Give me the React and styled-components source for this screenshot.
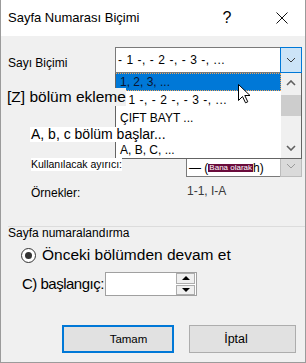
import React from "react";
import styled, { createGlobalStyle } from "styled-components";

const GlobalStyle = createGlobalStyle`
  * { box-sizing: border-box; }
  body {
    margin: 0;
    background: #ffffff;
    font-family: "Liberation Sans", Arial, sans-serif;
    color: #000;
  }
`;

const Window = styled.div`
  width: 306px;
  height: 363px;
  display: flex;
  flex-direction: column;
  border: 1px solid #9b9b9b;
  border-top: none;
  background: #f0f0f0;
  overflow: hidden;
`;

const TitleBar = styled.div`
  height: 36px;
  flex: none;
  display: flex;
  align-items: center;
  background: #ffffff;
  padding-left: 7px;
`;

const Title = styled.div`
  flex: 1;
  font-size: 13px;
  line-height: 16px;
`;

const TitleButton = styled.div`
  width: 46px;
  height: 36px;
  display: flex;
  align-items: center;
  justify-content: center;
  font-size: 16px;
  margin-right: ${(p) => p.$mr || 0}px;
`;

const Body = styled.div`
  flex: 1;
  display: flex;
  flex-direction: column;
  padding: 0 3px 0 7px;
`;

const Row = styled.div`
  display: flex;
  align-items: flex-start;
  margin-top: ${(p) => p.$mt || 0}px;
  justify-content: ${(p) => p.$justify || "flex-start"};
`;

const Label = styled.div`
  flex: none;
  width: ${(p) => (p.$w ? `${p.$w}px` : "auto")};
  margin-left: ${(p) => p.$ml || 0}px;
  margin-top: ${(p) => p.$mt || 0}px;
  font-size: ${(p) => p.$size || 12}px;
  line-height: ${(p) => p.$lh || 14}px;
  letter-spacing: ${(p) => p.$ls || 0}px;
  color: ${(p) => p.$color || "#000"};
  white-space: nowrap;
`;

/* labels that were painted over the open list */
const OverLabel = styled.div`
  position: relative;
  z-index: 3;
  align-self: flex-start;
  margin-left: ${(p) => p.$ml || 0}px;
  margin-top: ${(p) => p.$mt || 0}px;
  padding: 0 ${(p) => p.$px || 0}px;
  font-size: ${(p) => p.$size}px;
  line-height: ${(p) => p.$lh}px;
  background: ${(p) => p.$bg};
  white-space: nowrap;
`;

const Combo = styled.div`
  position: relative;
  width: 187px;
  height: 26px;
  display: flex;
  border: 1px solid #7a7a7a;
  background: #ffffff;
`;

const ComboText = styled.div`
  flex: 1;
  padding-left: 2px;
  font-size: 12px;
  line-height: 24px;
  letter-spacing: 0.55px;
  white-space: nowrap;
`;

const ComboButton = styled.div`
  width: 22px;
  margin: -1px -1px -1px 0;
  display: flex;
  align-items: center;
  justify-content: center;
  background: #cce4f7;
  border: 1px solid #0078d7;
`;

const DropList = styled.div`
  position: absolute;
  z-index: 2;
  left: -1px;
  top: 25px;
  width: 187px;
  height: 86px;
  display: flex;
  background: #ffffff;
  border: 1px solid #646464;
  border-top: none;
`;

const Items = styled.div`
  flex: 1;
  display: flex;
  flex-direction: column;
  overflow: hidden;
`;

const Item = styled.div`
  flex: none;
  height: ${(p) => p.$h || 18}px;
  padding: 1px 0 0 4px;
  font-size: 12px;
  line-height: 15px;
  letter-spacing: ${(p) => p.$ls || 0}px;
  white-space: nowrap;
  color: ${(p) => (p.$selected ? "#0a1530" : "#000")};
  background: ${(p) => (p.$selected ? "#0078d7" : "transparent")};
  border: 1px dotted ${(p) => (p.$selected ? "#f2a65a" : "transparent")};
  border-left: none;
`;

const ScrollBar = styled.div`
  width: 20px;
  display: flex;
  flex-direction: column;
  align-items: center;
  background: #f0f0f0;
`;

const ScrollArrow = styled.div`
  height: 20px;
  width: 100%;
  display: flex;
  align-items: center;
  justify-content: center;
`;

const ScrollThumb = styled.div`
  width: 100%;
  height: 21px;
  margin-top: 2px;
  background: #cdcdcd;
`;

const ScrollSpace = styled.div`
  flex: 1;
`;

const Cursor = styled.svg`
  position: absolute;
  z-index: 4;
  left: 122px;
  top: 36px;
`;

const SepCombo = styled.div`
  width: 116px;
  height: 22px;
  margin-left: auto;
  display: flex;
  border: 1px solid #7a7a7a;
  background: #ffffff;
`;

const SepText = styled.div`
  flex: 1;
  padding-left: 2px;
  padding-top: 3px;
  font-size: 12px;
  line-height: 14px;
  white-space: nowrap;
  display: flex;
  align-items: center;
`;

const Mark = styled.span`
  display: inline-block;
  margin-top: 1px;
  padding: 0 1px;
  font-size: 8px;
  line-height: 8px;
  color: #ffffff;
  background: #6a0b3b;
`;

const SepButton = styled.div`
  width: 22px;
  margin: -1px -1px -1px 0;
  display: flex;
  align-items: center;
  justify-content: center;
  background: #dadada;
  border: 1px solid #bcbcbc;
`;

const Divider = styled.div`
  height: 1px;
  margin: 26px -3px 0 0;
  background: #dcdcdc;
`;

const RadioRow = styled.div`
  display: flex;
  align-items: center;
  height: 20px;
  margin: 5px 0 0 13px;
  gap: 6px;
`;

const RadioCircle = styled.div`
  width: 15px;
  height: 15px;
  border-radius: 50%;
  border: 1px solid #333333;
  background: #ffffff;
  display: flex;
  align-items: center;
  justify-content: center;
`;

const RadioDot = styled.div`
  width: 7px;
  height: 7px;
  border-radius: 50%;
  background: #333333;
`;

const BigText = styled.span`
  font-size: 15.5px;
  line-height: 20px;
  white-space: nowrap;
`;

const SpinBox = styled.div`
  position: relative;
  width: 92px;
  height: 24px;
  display: flex;
  border: 1px solid #a0a0a0;
  background: #ffffff;
`;

const SpinInput = styled.div`
  flex: 1;
`;

const SpinButtons = styled.div`
  width: 20px;
  display: flex;
  flex-direction: column;
  gap: 1px;
  padding: 0 1px 0 0;
`;

const SpinButton = styled.div`
  flex: 1;
  display: flex;
  align-items: center;
  justify-content: center;
  background: #f0f0f0;
  border: 1px solid #adadad;
`;

const Triangle = styled.div`
  width: 0;
  height: 0;
  border-left: 4px solid transparent;
  border-right: 4px solid transparent;
  ${(p) =>
    p.$up
      ? "border-bottom: 4px solid #000;"
      : "border-top: 4px solid #000;"}
`;

const ButtonBar = styled.div`
  display: flex;
  justify-content: flex-end;
  gap: 15px;
  margin: 29px 6px 0 0;
`;

const DialogButton = styled.div`
  width: ${(p) => p.$w}px;
  height: 28px;
  display: flex;
  align-items: center;
  justify-content: center;
  padding-left: ${(p) => p.$pl || 0}px;
  padding-right: ${(p) => p.$pr || 0}px;
  background: #e1e1e1;
  border: ${(p) => (p.$primary ? "2px solid #0078d7" : "1px solid #adadad")};
  font-size: ${(p) => p.$size}px;
`;

const Chevron = ({ up, color = "#333", w = 10, sw = 1 }) => (
  <svg width={w} height="6" viewBox={`0 0 ${w} 6`}>
    <path
      d={up ? `M1 5 L${w / 2} 1 L${w - 1} 5` : `M1 1 L${w / 2} 5 L${w - 1} 1`}
      fill="none"
      stroke={color}
      strokeWidth={sw}
    />
  </svg>
);

export default function App() {
  return (
    <>
      <GlobalStyle />
      <Window>
        <TitleBar>
          <Title>Sayfa Numarası Biçimi</Title>
          <TitleButton $mr={9}>?</TitleButton>
          <TitleButton>
            <svg width="12" height="12" viewBox="0 0 12 12">
              <path d="M0.5 0.5 L11.5 11.5 M11.5 0.5 L0.5 11.5" stroke="#111" strokeWidth="1" />
            </svg>
          </TitleButton>
        </TitleBar>
        <Body>
          <Row $mt={11}>
            <Label $w={107} $mt={9}>Sayı Biçimi</Label>
            <Combo>
              <ComboText>- 1 -, - 2 -, - 3 -, ...</ComboText>
              <ComboButton>
                <Chevron color="#3c3c3c" />
              </ComboButton>
              <DropList>
                <Items>
                  <Item $selected>1, 2, 3, ...</Item>
                  <Item $ls={0.55}>- 1 -, - 2 -, - 3 -, ...</Item>
                  <Item>ÇIFT BAYT ...</Item>
                  <Item $h={14} />
                  <Item $h={16}>A, B, C, ...</Item>
                </Items>
                <ScrollBar>
                  <ScrollArrow>
                    <Chevron up color="#606060" w={10} sw={1.6} />
                  </ScrollArrow>
                  <ScrollThumb />
                  <ScrollSpace />
                  <ScrollArrow>
                    <Chevron color="#606060" w={10} sw={1.6} />
                  </ScrollArrow>
                </ScrollBar>
              </DropList>
              <Cursor width="13" height="20" viewBox="0 0 13 20">
                <path
                  d="M0.5 0.5 L0.5 16.5 L4.5 12.5 L7.5 18.8 L9.8 17.8 L6.8 11.5 L12 11.5 Z"
                  fill="#ffffff"
                  stroke="#000"
                  strokeWidth="1"
                  strokeLinejoin="miter"
                />
              </Cursor>
            </Combo>
          </Row>

          <OverLabel $mt={15} $ml={-1} $size={15.5} $lh={18} $bg="#f0f0f0">
            [Z] bölüm ekleme
          </OverLabel>
          <OverLabel $mt={21} $ml={22} $size={14} $lh={15} $px={1} $bg="#ffffff">
            A, b, c bölüm başlar...
          </OverLabel>

          <Row $mt={13}>
            <OverLabel $mt={3} $ml={23} $size={10.5} $lh={13} $bg="#ffffff">
              Kullanılacak ayırıcı:
            </OverLabel>
            <SepCombo>
              <SepText>
                — (<Mark>Bana olarak</Mark>h)
              </SepText>
              <SepButton>
                <Chevron color="#9a9a9a" />
              </SepButton>
            </SepCombo>
          </Row>

          <Row $mt={9}>
            <Label $ml={23} $w={156}>Örnekler:</Label>
            <Label $mt={-2} $color="#3a3a3a">1-1, I-A</Label>
          </Row>

          <Divider />
          <Label $lh={13}>Sayfa numaralandırma</Label>

          <RadioRow>
            <RadioCircle>
              <RadioDot />
            </RadioCircle>
            <BigText>Önceki bölümden devam et</BigText>
          </RadioRow>

          <Row $mt={7}>
            <Label $ml={14} $w={83} $size={15} $lh={24} $ls={-0.5}>
              C) başlangıç:
            </Label>
            <SpinBox>
              <SpinInput />
              <SpinButtons>
                <SpinButton>
                  <Triangle $up />
                </SpinButton>
                <SpinButton>
                  <Triangle />
                </SpinButton>
              </SpinButtons>
            </SpinBox>
          </Row>

          <ButtonBar>
            <DialogButton $primary $w={112} $pl={21} $size={11.5}>
              Tamam
            </DialogButton>
            <DialogButton $w={107} $pr={13} $size={12.5}>
              İptal
            </DialogButton>
          </ButtonBar>
        </Body>
      </Window>
    </>
  );
}
